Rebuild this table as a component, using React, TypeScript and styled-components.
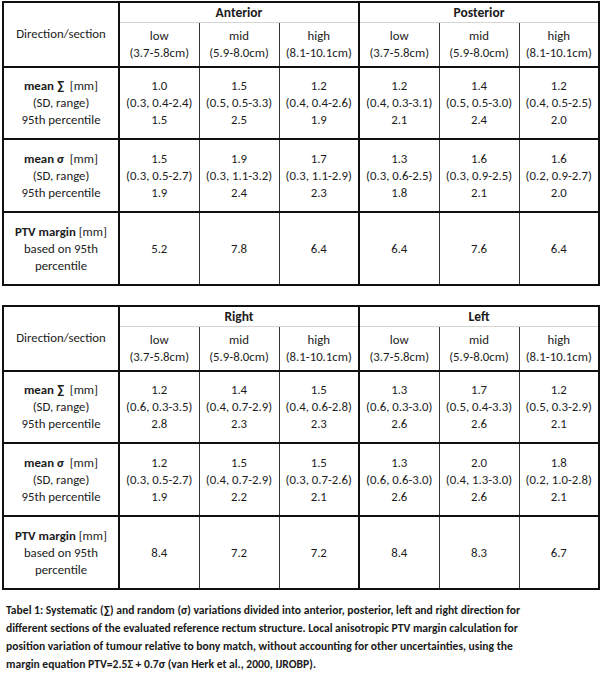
import styled, { createGlobalStyle } from 'styled-components';

const GlobalStyle = createGlobalStyle`
  body {
    margin: 0;
    background: #ffffff;
    font-family: Carlito, Lato, "Liberation Sans", sans-serif;
    color: #1c1c1c;
  }
`;

const Page = styled.div`
  width: 600px;
  padding: 1px 2px 0 2px;
  box-sizing: border-box;
  display: flex;
  flex-direction: column;
  gap: 19px;
`;

const Table = styled.table`
  width: 596px;
  border-collapse: collapse;
  table-layout: fixed;
  border: 2px solid #111;
  font-size: 12.8px;
  line-height: 17px;
`;

const HeadCell = styled.th<{ $thick?: boolean }>`
  font-weight: normal;
  text-align: center;
  vertical-align: middle;
  padding: 0 0 1px 0;
  border-bottom: 2px solid #111;
  border-left: ${p => (p.$thick ? '2px solid #111' : '1px solid #333')};
  height: 42px;
  white-space: nowrap;
`;

const GroupTitle = styled.th`
  font-weight: bold;
  font-size: 13.5px;
  text-align: center;
  padding: 0;
  height: 19px;
  line-height: 19px;
  border-left: 2px solid #111;
  border-bottom: 1px solid #d4d4d4;
`;

const LabelCell = styled.td`
  text-align: center;
  vertical-align: middle;
  padding: 0 0 1px 0;
  border-bottom: 2px solid #111;
  border-right: 2px solid #111;
  white-space: nowrap;
`;

const DirectionCell = styled.th`
  font-weight: normal;
  text-align: center;
  vertical-align: middle;
  padding: 0 0 2px 0;
  border-bottom: 2px solid #111;
  border-right: 2px solid #111;
`;

const ValueCell = styled.td<{ $thick?: boolean }>`
  text-align: center;
  vertical-align: middle;
  padding: 0 0 1px 0;
  border-bottom: 2px solid #111;
  border-left: ${p => (p.$thick ? '2px solid #111' : '1px solid #333')};
  white-space: nowrap;
`;

const DataRow = styled.tr<{ $tall?: boolean }>`
  height: ${p => (p.$tall ? 73 : 72)}px;
`;

const Strong = styled.b`
  font-weight: bold;
`;

const Caption = styled.p`
  margin: -8px 0 0 4px;
  max-width: 520px;
  font-weight: bold;
  font-size: 11.6px;
  line-height: 18px;
  color: #1a1a1a;
`;

type Stat = [string, string, string];

interface DirectionGroup {
  name: string;
  sigmaSys: Stat[];
  sigmaRand: Stat[];
  ptv: string[];
}

interface TableData {
  left: DirectionGroup;
  right: DirectionGroup;
}

const SECTIONS = [
  ['low', '(3.7-5.8cm)'],
  ['mid', '(5.9-8.0cm)'],
  ['high', '(8.1-10.1cm)'],
];

const tables: TableData[] = [
  {
    left: {
      name: 'Anterior',
      sigmaSys: [
        ['1.0', '(0.3, 0.4-2.4)', '1.5'],
        ['1.5', '(0.5, 0.5-3.3)', '2.5'],
        ['1.2', '(0.4, 0.4-2.6)', '1.9'],
      ],
      sigmaRand: [
        ['1.5', '(0.3, 0.5-2.7)', '1.9'],
        ['1.9', '(0.3, 1.1-3.2)', '2.4'],
        ['1.7', '(0.3, 1.1-2.9)', '2.3'],
      ],
      ptv: ['5.2', '7.8', '6.4'],
    },
    right: {
      name: 'Posterior',
      sigmaSys: [
        ['1.2', '(0.4, 0.3-3.1)', '2.1'],
        ['1.4', '(0.5, 0.5-3.0)', '2.4'],
        ['1.2', '(0.4, 0.5-2.5)', '2.0'],
      ],
      sigmaRand: [
        ['1.3', '(0.3, 0.6-2.5)', '1.8'],
        ['1.6', '(0.3, 0.9-2.5)', '2.1'],
        ['1.6', '(0.2, 0.9-2.7)', '2.0'],
      ],
      ptv: ['6.4', '7.6', '6.4'],
    },
  },
  {
    left: {
      name: 'Right',
      sigmaSys: [
        ['1.2', '(0.6, 0.3-3.5)', '2.8'],
        ['1.4', '(0.4, 0.7-2.9)', '2.3'],
        ['1.5', '(0.4, 0.6-2.8)', '2.3'],
      ],
      sigmaRand: [
        ['1.2', '(0.3, 0.5-2.7)', '1.9'],
        ['1.5', '(0.4, 0.7-2.9)', '2.2'],
        ['1.5', '(0.3, 0.7-2.6)', '2.1'],
      ],
      ptv: ['8.4', '7.2', '7.2'],
    },
    right: {
      name: 'Left',
      sigmaSys: [
        ['1.3', '(0.6, 0.3-3.0)', '2.6'],
        ['1.7', '(0.5, 0.4-3.3)', '2.6'],
        ['1.2', '(0.5, 0.3-2.9)', '2.1'],
      ],
      sigmaRand: [
        ['1.3', '(0.6, 0.6-3.0)', '2.6'],
        ['2.0', '(0.4, 1.3-3.0)', '2.6'],
        ['1.8', '(0.2, 1.0-2.8)', '2.1'],
      ],
      ptv: ['8.4', '8.3', '6.7'],
    },
  },
];

const StatCells = ({ stats }: { stats: Stat[] }) => (
  <>
    {stats.map((s, i) => (
      <ValueCell key={i} $thick={i === 0}>
        {s[0]}
        <br />
        {s[1]}
        <br />
        {s[2]}
      </ValueCell>
    ))}
  </>
);

const MarginTable = ({ data }: { data: TableData }) => {
  const groups = [data.left, data.right];
  return (
    <Table>
      <colgroup>
        <col style={{ width: 116 }} />
        {Array.from({ length: 6 }).map((_, i) => (
          <col key={i} style={{ width: 80 }} />
        ))}
      </colgroup>
      <thead>
        <tr>
          <DirectionCell rowSpan={2}>Direction/section</DirectionCell>
          {groups.map(g => (
            <GroupTitle key={g.name} colSpan={3}>
              {g.name}
            </GroupTitle>
          ))}
        </tr>
        <tr>
          {groups.map(g =>
            SECTIONS.map(([label, range], i) => (
              <HeadCell key={g.name + label} $thick={i === 0}>
                {label}
                <br />
                {range}
              </HeadCell>
            ))
          )}
        </tr>
      </thead>
      <tbody>
        <DataRow>
          <LabelCell>
            <Strong>mean ∑</Strong>&nbsp; [mm]
            <br />
            (SD, range)
            <br />
            95th percentile
          </LabelCell>
          <StatCells stats={data.left.sigmaSys} />
          <StatCells stats={data.right.sigmaSys} />
        </DataRow>
        <DataRow $tall>
          <LabelCell>
            <Strong>mean σ</Strong>&nbsp; [mm]
            <br />
            (SD, range)
            <br />
            95th percentile
          </LabelCell>
          <StatCells stats={data.left.sigmaRand} />
          <StatCells stats={data.right.sigmaRand} />
        </DataRow>
        <DataRow $tall>
          <LabelCell>
            <Strong>PTV margin</Strong> [mm]
            <br />
            based on 95th
            <br />
            percentile
          </LabelCell>
          {groups.map(g =>
            g.ptv.map((v, i) => (
              <ValueCell key={g.name + i} $thick={i === 0}>
                {v}
              </ValueCell>
            ))
          )}
        </DataRow>
      </tbody>
    </Table>
  );
};

const App = () => (
  <>
    <GlobalStyle />
    <Page>
      {tables.map(t => (
        <MarginTable key={t.left.name} data={t} />
      ))}
      <Caption>
        Tabel 1: Systematic (∑) and random (σ) variations divided into anterior, posterior, left and right direction for
        different sections of the evaluated reference rectum structure. Local anisotropic PTV margin calculation for
        position variation of tumour relative to bony match, without accounting for other uncertainties, using the
        margin equation PTV=2.5Σ + 0.7σ (van Herk et al., 2000, IJROBP).
      </Caption>
    </Page>
  </>
);

export default App;
